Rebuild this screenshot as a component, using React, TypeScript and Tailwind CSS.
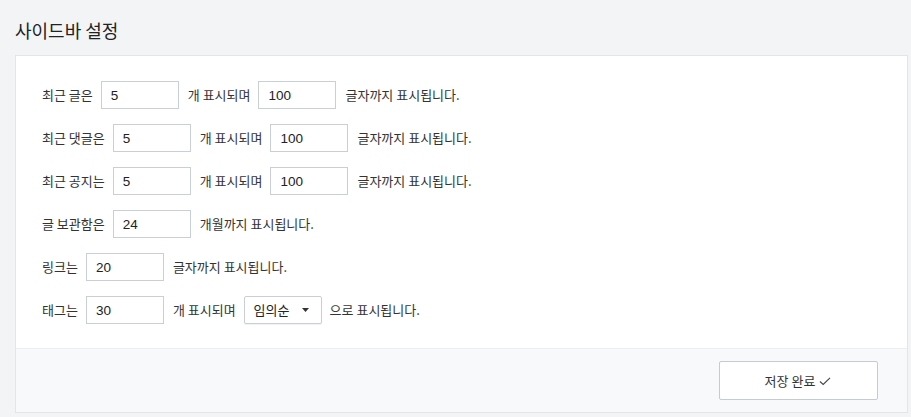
import { useState } from "react";

const FONT = { fontFamily: '"Noto Sans CJK KR", "Noto Sans", sans-serif' };

function NumberInput({ value }: { value: string }) {
  const [v, setV] = useState(value);
  return (
    <input
      value={v}
      onChange={(e) => setV(e.target.value)}
      className="ml-[8px] mr-[9px] h-[28px] w-[78px] border border-[#c9cfd9] bg-white px-[9px] text-[13.5px] text-[#222] outline-none"
      style={{ fontFamily: '"Liberation Sans", Arial, sans-serif' }}
    />
  );
}

function OrderSelect() {
  return (
    <div className="ml-[8px] mr-[8px] flex h-[28px] w-[78px] items-center justify-between rounded-[2px] border border-[#c9cfd9] bg-white pl-[9px] pr-[12px] text-[13px] text-[#222] shadow-[0_1px_1px_rgba(0,0,0,0.06)]">
      <span>임의순</span>
      <svg width="7" height="4" viewBox="0 0 7 4">
        <path d="M0 0h7L3.5 4z" fill="#333" />
      </svg>
    </div>
  );
}

export default function App() {
  return (
    <div className="min-h-[417px] bg-[#f3f4f6] pl-[15px] pr-[3px] text-[#333]" style={FONT}>
      <h1 className="pt-[17px] pb-[12px] text-[18px] leading-[26px] text-[#222]">사이드바 설정</h1>

      <div className="border border-[#e2e5e9] bg-white">
        <div className="flex flex-col gap-[15px] px-[26px] pt-[25px] pb-[24px] text-[13px]">
          <div className="flex items-center">
            <span>최근 글은</span>
            <NumberInput value="5" />
            <span>개 표시되며</span>
            <NumberInput value="100" />
            <span>글자까지 표시됩니다.</span>
          </div>
          <div className="flex items-center">
            <span>최근 댓글은</span>
            <NumberInput value="5" />
            <span>개 표시되며</span>
            <NumberInput value="100" />
            <span>글자까지 표시됩니다.</span>
          </div>
          <div className="flex items-center">
            <span>최근 공지는</span>
            <NumberInput value="5" />
            <span>개 표시되며</span>
            <NumberInput value="100" />
            <span>글자까지 표시됩니다.</span>
          </div>
          <div className="flex items-center">
            <span>글 보관함은</span>
            <NumberInput value="24" />
            <span>개월까지 표시됩니다.</span>
          </div>
          <div className="flex items-center">
            <span>링크는</span>
            <NumberInput value="20" />
            <span>글자까지 표시됩니다.</span>
          </div>
          <div className="flex items-center">
            <span>태그는</span>
            <NumberInput value="30" />
            <span>개 표시되며</span>
            <OrderSelect />
            <span>으로 표시됩니다.</span>
          </div>
        </div>

        <div className="flex justify-end border-t border-[#eceef1] bg-[#f8f9fb] px-[29px] py-[12px]">
          <button className="flex h-[39px] w-[159px] items-center justify-center gap-[3px] rounded-[2px] border border-[#c5cad3] bg-white text-[13px] text-[#333]">
            저장 완료
            <svg width="14" height="14" viewBox="0 0 14 14" fill="none">
              <path d="M2 7.5l3.2 3L12 3.8" stroke="#444" strokeWidth="1.1" />
            </svg>
          </button>
        </div>
      </div>
    </div>
  );
}
